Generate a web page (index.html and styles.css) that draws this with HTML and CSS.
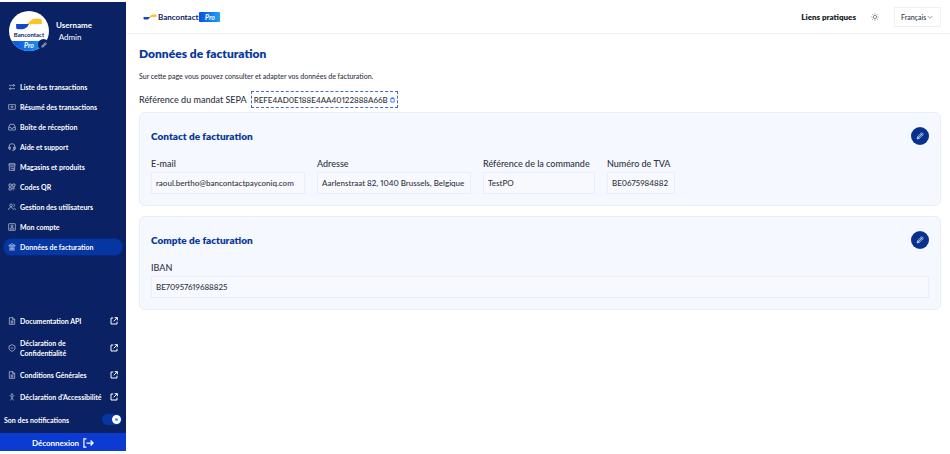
FILE: index.html
```html
<!DOCTYPE html>
<html lang="fr">
<head>
  <meta charset="UTF-8">
  <meta name="viewport" content="width=device-width, initial-scale=1.0">
  <title>Données de facturation</title>
  <link rel="stylesheet" href="styles.css">
</head>
<body>
  <!-- shared icons -->
  <svg class="sprite" aria-hidden="true">
    <symbol id="i-transfer" viewBox="0 0 24 24"><path d="M3 7h17M16 3l4 4-4 4M21 17H4M8 13l-4 4 4 4"/></symbol>
    <symbol id="i-money" viewBox="0 0 24 24"><rect x="2" y="4" width="20" height="15" rx="1"/><circle cx="12" cy="11.500" r="3"/><path d="M6 11.500h.5M17.500 11.500h.5"/></symbol>
    <symbol id="i-inbox" viewBox="0 0 24 24"><path d="M2 13l4-9h12l4 9v8H2zM2 13h6c0 5 8 5 8 0h6"/></symbol>
    <symbol id="i-support" viewBox="0 0 24 24"><path d="M3 17v-6a9 9 0 0 1 18 0v6c0 3-2 5-6 5h-3M3 12h4v7H3zM17 12h4v7h-4z"/></symbol>
    <symbol id="i-store" viewBox="0 0 24 24"><path d="M3 2h18v8c-2 3-5 2-6 0-1 2-5 2-6 0-1 2-4 3-6 0zM4 12v10h16V12M8 16h8v6M3 6h18"/></symbol>
    <symbol id="i-qr" viewBox="0 0 24 24"><path d="M3 3h7v7H3zM14 3h7v7h-7zM3 14h7v7H3zM14 14h3v3h-3zM20 14v3M14 21h3M20 20v1"/></symbol>
    <symbol id="i-users" viewBox="0 0 24 24"><circle cx="9" cy="7" r="4"/><path d="M2 21v-2c0-7 14-7 14 0v2M16 3c5 1 5 7 0 8M19 15c3 1 3 3 3 6"/></symbol>
    <symbol id="i-account" viewBox="0 0 24 24"><rect x="2" y="2" width="20" height="20" rx="1"/><circle cx="12" cy="9" r="3"/><path d="M6 18c1-6 11-6 12 0z"/></symbol>
    <symbol id="i-bank" viewBox="0 0 24 24"><path d="M2 8l10-6 10 6zM3 21h18M5 18h14M6 9v9M10 9v9M14 9v9M18 9v9"/></symbol>
    <symbol id="i-doc" viewBox="0 0 24 24"><path d="M4 2h11l5 5v15H4zM14 2v6h6M8 12h8M8 15h8M8 18h8"/></symbol>
    <symbol id="i-shield" viewBox="0 0 24 24"><path d="M12 2l9 4v6c0 5-4 8-9 10-5-2-9-5-9-10V6zM8 12h8"/></symbol>
    <symbol id="i-access" viewBox="0 0 24 24"><circle cx="12" cy="4" r="2"/><path d="M5 8l7 2 7-2M12 10v5M12 14l-4 8M12 14l4 8"/></symbol>
    <symbol id="i-external" viewBox="0 0 24 24"><path d="M10 3H3v18h18v-7M14 2h8v8M22 2L11 13"/></symbol>
    <symbol id="i-pencil" viewBox="0 0 24 24"><path d="M3 21l2-7L16 3c2-2 7 3 5 5L10 19zM5 14l5 5M14 5l5 5M8 16l8-8"/></symbol>
    <symbol id="i-logout" viewBox="0 0 26 24"><path d="M8 2H2v20h6M8 12h16M18 6l6 6-6 6"/></symbol>
    <symbol id="i-copy" viewBox="0 0 24 24"><path d="M4 4h16v18H4zM8 2h8v2H8z"/></symbol>
    <symbol id="i-sun" viewBox="0 0 24 24"><circle cx="12" cy="12" r="5"/><path d="M12 1v3M12 20v3M1 12h3M20 12h3M4 4l2 2M18 18l2 2M4 20l2-2M18 6l2-2"/></symbol>
    <symbol id="i-chevron" viewBox="0 0 24 24"><path d="M3 8l9 9 9-9"/></symbol>
    <symbol id="i-mark" viewBox="0 0 30 14">
      <path class="mark-blue" d="M0 7h15c-2 4-4 6-8 6H2c-1 0-2-1-2-2z"/>
      <path class="mark-yellow" d="M11 7c5 0 5-6 11-6h6c1 0 2 1 2 2v4H20c-4 0-3 2-5 3 1-1 2-2 1-3z"/>
    </symbol>
  </svg>

  <div class="layout">
    <aside class="sidebar">
      <div class="profile">
        <div class="avatar">
          <div class="avatar-logo">
            <svg class="avatar-mark"><use href="#i-mark"/></svg>
            <span class="avatar-name">Bancontact</span>
            <span class="avatar-pro">Pro</span>
          </div>
          <button type="button" class="avatar-edit" aria-label="Modifier"><svg class="icon"><use href="#i-pencil"/></svg></button>
        </div>
        <div class="profile-text">
          <div class="profile-name">Username</div>
          <div class="profile-role">Admin</div>
        </div>
      </div>

      <nav class="menu">
        <a href="#"><svg class="icon"><use href="#i-transfer"/></svg>Liste des transactions</a>
        <a href="#"><svg class="icon"><use href="#i-money"/></svg>Résumé des transactions</a>
        <a href="#"><svg class="icon"><use href="#i-inbox"/></svg>Boîte de réception</a>
        <a href="#"><svg class="icon"><use href="#i-support"/></svg>Aide et support</a>
        <a href="#"><svg class="icon"><use href="#i-store"/></svg>Magasins et produits</a>
        <a href="#"><svg class="icon"><use href="#i-qr"/></svg>Codes QR</a>
        <a href="#"><svg class="icon"><use href="#i-users"/></svg>Gestion des utilisateurs</a>
        <a href="#"><svg class="icon"><use href="#i-account"/></svg>Mon compte</a>
        <a href="#" class="active"><svg class="icon"><use href="#i-bank"/></svg>Données de facturation</a>
      </nav>

      <div class="links">
        <a href="#"><svg class="icon"><use href="#i-doc"/></svg><span>Documentation API</span><svg class="icon external"><use href="#i-external"/></svg></a>
        <a href="#"><svg class="icon"><use href="#i-shield"/></svg><span>Déclaration de<br>Confidentialité</span><svg class="icon external"><use href="#i-external"/></svg></a>
        <a href="#"><svg class="icon"><use href="#i-doc"/></svg><span>Conditions Générales</span><svg class="icon external"><use href="#i-external"/></svg></a>
        <a href="#"><svg class="icon"><use href="#i-access"/></svg><span>Déclaration d'Accessibilité</span><svg class="icon external"><use href="#i-external"/></svg></a>
      </div>

      <div class="sound">
        <label for="sound">Son des notifications</label>
        <input type="checkbox" id="sound" class="toggle" checked>
      </div>
      <button type="button" class="logout">Déconnexion<svg class="icon"><use href="#i-logout"/></svg></button>
    </aside>

    <div class="page">
      <header class="topbar">
        <a href="#" class="brand">
          <svg class="brand-mark"><use href="#i-mark"/></svg>
          <span class="brand-name">Bancontact</span>
          <span class="brand-pro">Pro</span>
        </a>
        <div class="topbar-right">
          <a href="#" class="useful">Liens pratiques</a>
          <button type="button" class="theme" aria-label="Thème"><svg class="icon"><use href="#i-sun"/></svg></button>
          <div class="lang">
            <select aria-label="Langue">
              <option>Français</option>
            </select>
            <svg class="icon"><use href="#i-chevron"/></svg>
          </div>
        </div>
      </header>

      <main class="content">
        <h1>Données de facturation</h1>
        <p class="intro">Sur cette page vous pouvez consulter et adapter vos données de facturation.</p>
        <div class="sepa">
          <span>Référence du mandat SEPA</span>
          <button type="button" class="sepa-code">REFE4AD0E188E4AA40122888A66B<svg class="icon"><use href="#i-copy"/></svg></button>
        </div>

        <section class="card">
          <div class="card-head">
            <h2>Contact de facturation</h2>
            <button type="button" class="edit" aria-label="Modifier le contact"><svg class="icon"><use href="#i-pencil"/></svg></button>
          </div>
          <div class="fields contact">
            <div class="field">
              <label for="email">E-mail</label>
              <input type="text" id="email" value="raoul.bertho@bancontactpayconiq.com" readonly>
            </div>
            <div class="field">
              <label for="address">Adresse</label>
              <input type="text" id="address" value="Aarlenstraat 82, 1040 Brussels, Belgique" readonly>
            </div>
            <div class="field">
              <label for="order">Référence de la commande</label>
              <input type="text" id="order" value="TestPO" readonly>
            </div>
            <div class="field">
              <label for="vat">Numéro de TVA</label>
              <input type="text" id="vat" value="BE0675984882" readonly>
            </div>
          </div>
        </section>

        <section class="card">
          <div class="card-head">
            <h2>Compte de facturation</h2>
            <button type="button" class="edit" aria-label="Modifier le compte"><svg class="icon"><use href="#i-pencil"/></svg></button>
          </div>
          <div class="fields">
            <div class="field">
              <label for="iban">IBAN</label>
              <input type="text" id="iban" value="BE70957619688825" readonly>
            </div>
          </div>
        </section>
      </main>
    </div>
  </div>
</body>
</html>
```
FILE: styles.css
```css
*,
*::before {
  box-sizing: border-box;
}

body {
  margin: 0;
  background: #fff;
  color: #30343f;
  font-family: Lato, "Open Sans", sans-serif;
  font-size: 8px;
  font-weight: 500;
  font-variant-numeric: proportional-nums;
}

a {
  color: inherit;
  text-decoration: none;
}

button,
input,
select {
  font-family: inherit;
  font-weight: inherit;
  font-variant-numeric: inherit;
  color: inherit;
}

button {
  padding: 0;
  border: none;
  background: none;
  cursor: pointer;
}

.sprite {
  display: none;
}

.icon {
  width: 8px;
  height: 8px;
  flex: none;
  fill: none;
  stroke: currentColor;
  stroke-width: 2;
}

.mark-blue {
  fill: #1447c8;
}

.mark-yellow {
  fill: #ffc229;
}

.layout {
  display: flex;
  min-height: 100vh;
}

/* sidebar */
.sidebar {
  display: flex;
  flex-direction: column;
  flex: none;
  width: 126px;
  margin: 2px 0 3px;
  background: #0a2163;
  color: #fff;
  font-size: 7px;
  font-weight: 700;
}

.profile {
  display: flex;
  gap: 7px;
  padding: 9px 9px 26px;
}

.avatar {
  position: relative;
  width: 40px;
  height: 40px;
}

.avatar-logo {
  display: flex;
  flex-direction: column;
  align-items: center;
  height: 100%;
  padding-top: 7px;
  overflow: hidden;
  border-radius: 50%;
  background: #fff;
}

.avatar-mark {
  width: 30px;
  height: 12px;
}

.avatar-name {
  color: #0a2163;
  font-size: 6px;
  line-height: 9px;
}

.avatar-pro {
  flex: 1;
  width: 100%;
  margin-top: 2px;
  background: linear-gradient(90deg, #0a50e0, #1da0f8);
  font-size: 7px;
  font-style: italic;
  line-height: 9px;
  text-align: center;
}

.avatar-edit {
  position: absolute;
  right: 0;
  bottom: 1px;
  display: flex;
  align-items: center;
  justify-content: center;
  width: 11px;
  height: 11px;
  border-radius: 50%;
  background: #0a2163;
  color: #fff;
}

.avatar-edit .icon {
  width: 6px;
  height: 6px;
}

.profile-text {
  padding-top: 8px;
  font-size: 8px;
  line-height: 12px;
  text-align: center;
}

.profile-role {
  margin-right: 8px;
  font-size: 8px;
  font-weight: 400;
}

.menu {
  display: flex;
  flex-direction: column;
  gap: 4px;
  padding: 2px 4px;
}

.menu a {
  display: flex;
  align-items: center;
  gap: 4px;
  height: 16px;
  padding: 0 4px;
  border-radius: 7px;
}

.menu .active {
  background: #0536a2;
  box-shadow: 0 0 3px #0536a2;
}

.menu .icon,
.links .icon {
  opacity: 0.8;
}

.links {
  display: flex;
  flex-direction: column;
  gap: 12px;
  margin-top: auto;
  padding: 0 8px;
}

.links a {
  display: flex;
  align-items: center;
  gap: 4px;
  line-height: 10px;
}

.links .external {
  margin-left: auto;
  opacity: 1;
  stroke-width: 3;
}

.sound {
  display: flex;
  align-items: center;
  justify-content: space-between;
  padding: 12px 4px 8px;
}

.toggle {
  display: flex;
  align-items: center;
  justify-content: flex-end;
  width: 20px;
  height: 11px;
  margin: 0;
  padding: 1px;
  border-radius: 6px;
  background: #0536a2;
  appearance: none;
}

.toggle::before {
  content: "";
  width: 9px;
  height: 9px;
  border: 3px solid #fff;
  border-radius: 50%;
  background: #6b8bd8;
}

.logout {
  display: flex;
  align-items: center;
  justify-content: center;
  gap: 4px;
  height: 18px;
  padding-top: 2px;
  background: #0b3bd0;
  color: #fff;
  font-size: 8px;
  font-weight: 700;
}

.logout .icon {
  width: 11px;
  height: 10px;
  stroke-width: 3;
}

/* page */
.page {
  flex: 1;
  min-width: 0;
}

.topbar {
  display: flex;
  align-items: center;
  justify-content: space-between;
  height: 34px;
  padding: 0 9px 0 17px;
  border-bottom: 1px solid #f0f0f2;
}

.brand {
  display: flex;
  align-items: center;
  gap: 1px;
  color: #0a2163;
  font-weight: 700;
}

.brand-mark {
  width: 14px;
  height: 6px;
}

.brand-name {
  font-size: 8px;
}

.brand-pro {
  width: 21px;
  background: linear-gradient(90deg, #0a50e0, #1da0f8);
  border-radius: 1px;
  color: #fff;
  font-size: 7px;
  font-style: italic;
  line-height: 10px;
  text-align: center;
}

.topbar-right {
  display: flex;
  align-items: center;
  gap: 15px;
}

.useful {
  color: #1c1f26;
  font-weight: 800;
}

.theme {
  display: flex;
  color: #555;
}

.lang {
  display: flex;
  align-items: center;
  height: 20px;
  padding: 0 7px 0 6px;
  border: 1px solid #f0f0f2;
}

.lang select {
  padding: 0;
  border: none;
  background: none;
  font-size: 7px;
  appearance: none;
}

.lang .icon {
  width: 6px;
  height: 6px;
}

.content {
  padding: 12px 9px 12px 13px;
}

h1,
h2 {
  margin: 0;
  color: #0a389c;
  font-weight: 800;
}

h1 {
  font-size: 12px;
  line-height: 16px;
}

.intro {
  margin: 9px 0 10px;
  font-size: 7px;
  line-height: 10px;
}

.sepa {
  display: flex;
  align-items: center;
  gap: 4px;
  margin-bottom: 4px;
  font-size: 9px;
}

.sepa-code {
  display: flex;
  align-items: center;
  gap: 2px;
  height: 17px;
  padding: 0 2px;
  border: 1px dashed #4468cc;
  font-size: 8px;
}

.sepa-code .icon {
  width: 5px;
  height: 6px;
  color: #2b6be0;
  stroke-width: 4;
}

.card {
  margin-bottom: 10px;
  padding: 14px 11px 11px;
  border: 1px solid #e9eef8;
  border-radius: 6px;
  background: #f5f8fe;
}

.card-head {
  display: flex;
  align-items: center;
  justify-content: space-between;
  margin-bottom: 12px;
}

h2 {
  font-size: 10px;
  line-height: 14px;
}

.edit {
  display: flex;
  align-items: center;
  justify-content: center;
  width: 18px;
  height: 18px;
  border-radius: 50%;
  background: #08308f;
  color: #fff;
}

.fields {
  display: grid;
  gap: 12px;
}

.contact {
  grid-template-columns: 154px 154px 112px 68px;
}

.field label {
  display: block;
  margin-bottom: 1px;
  font-size: 9px;
  line-height: 14px;
  white-space: nowrap;
}

.field input {
  display: block;
  width: 100%;
  height: 22px;
  padding: 0 4px;
  border: 1px solid #e9eef8;
  background: #f7f9fe;
  font-size: 8px;
  outline: none;
}
```
